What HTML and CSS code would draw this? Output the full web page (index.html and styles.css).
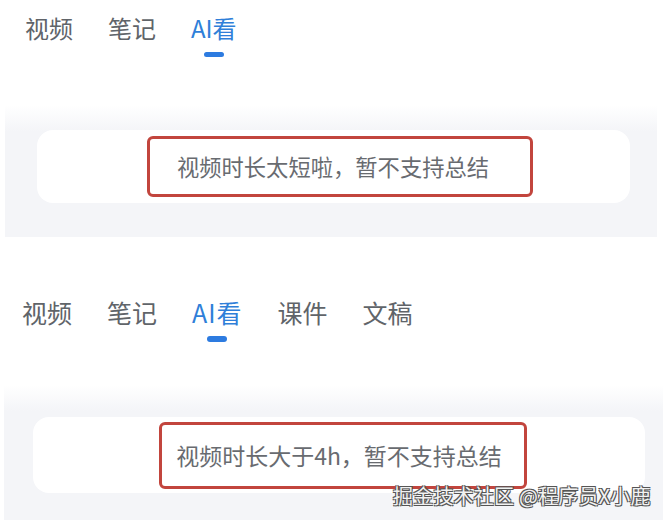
FILE: index.html
```html
<!DOCTYPE html>
<html lang="zh-CN">
<head>
    <meta charset="UTF-8">
    <meta name="viewport" content="width=device-width, initial-scale=1.0">
    <title>AI看 提示</title>
    <link rel="stylesheet" href="styles.css">
</head>
<body>
    <!-- 第一张截图：视频太短 -->
    <section class="panel panel-short">
        <nav class="tabs">
            <span class="tab">视频</span>
            <span class="tab">笔记</span>
            <span class="tab active">AI看<i class="indicator"></i></span>
        </nav>
        <div class="band">
            <div class="card">
                <span class="mark">视频时长太短啦，暂不支持总结</span>
            </div>
        </div>
    </section>

    <!-- 第二张截图：视频太长 -->
    <section class="panel panel-long">
        <nav class="tabs">
            <span class="tab">视频</span>
            <span class="tab">笔记</span>
            <span class="tab active">AI看<i class="indicator"></i></span>
            <span class="tab">课件</span>
            <span class="tab">文稿</span>
        </nav>
        <div class="band">
            <div class="card">
                <span class="mark">视频时长大于4h，暂不支持总结</span>
            </div>
        </div>
        <div class="watermark">掘金技术社区 @程序员X小鹿</div>
    </section>
</body>
</html>
```

FILE: styles.css
```css
/* 页面基础 */
body {
    margin: 0;
    padding: 0;
    background: #fff;
    font-family: "Noto Sans CJK SC", "Noto Sans", sans-serif;
    color: #62666b;
    overflow: hidden;
}
.panel {
    position: relative;
}

/* 顶部标签 */
.tabs {
    display: flex;
    gap: 35px;
}
.tab {
    position: relative;
    color: #606469;
}
.tab.active {
    color: #2f7fd9;
}
.indicator {
    position: absolute;
    left: 50%;
    transform: translateX(-50%);
    border-radius: 3px;
    background: #2d7be0;
}

/* 灰色区域和白色卡片 */
.band {
    background: linear-gradient(#fff, #f4f5f8 26px);
    margin: 0 6px 0 5px;
}
.card {
    background: #fff;
    border-radius: 16px;
    display: flex;
    justify-content: center;
    align-items: center;
}
.mark {
    display: inline-block;
    border: 3px solid #c2453d;
    border-radius: 6px;
    color: #686b70;
    line-height: 1;
}

/* 第一张 */
.panel-short {
    padding-top: 16px;
}
.panel-short .tabs {
    padding-left: 25px;
    font-size: 24px;
    line-height: 24px;
}
.panel-short .indicator {
    top: 36px;
    width: 20px;
    height: 5px;
}
.panel-short .band {
    margin-top: 65px;
    padding: 25px 27px 34px 32px;
}
.panel-short .card {
    height: 73px;
}
.panel-short .mark {
    font-size: 22.3px;
    margin-left: 13px;
    padding: 16px 41px 16px 27px;
}

/* 第二张 */
.panel-long {
    padding-top: 63px;
}
.panel-long .tabs {
    padding-left: 22px;
    font-size: 25px;
    line-height: 25px;
}
.panel-long .tab.active {
    letter-spacing: 1px;
}
.panel-long .indicator {
    top: 36px;
    width: 20px;
    height: 6px;
}
.panel-long .band {
    margin: 60px 0 0 4px;
    padding: 32px 18px 40px 29px;
}
.panel-long .card {
    height: 76px;
}
.panel-long .mark {
    font-size: 23px;
    margin-left: 8px;
    padding: 19px 22px 19px 14px;
}

/* 水印 */
.watermark {
    position: absolute;
    left: 393px;
    top: 249px;
    font-size: 20px;
    line-height: 20px;
    color: #f2f2f2;
    letter-spacing: 0.2px;
    text-shadow: 1px 1px 0 #555, -1px -1px 0 #555, 1px -1px 0 #555, -1px 1px 0 #555;
}
```
